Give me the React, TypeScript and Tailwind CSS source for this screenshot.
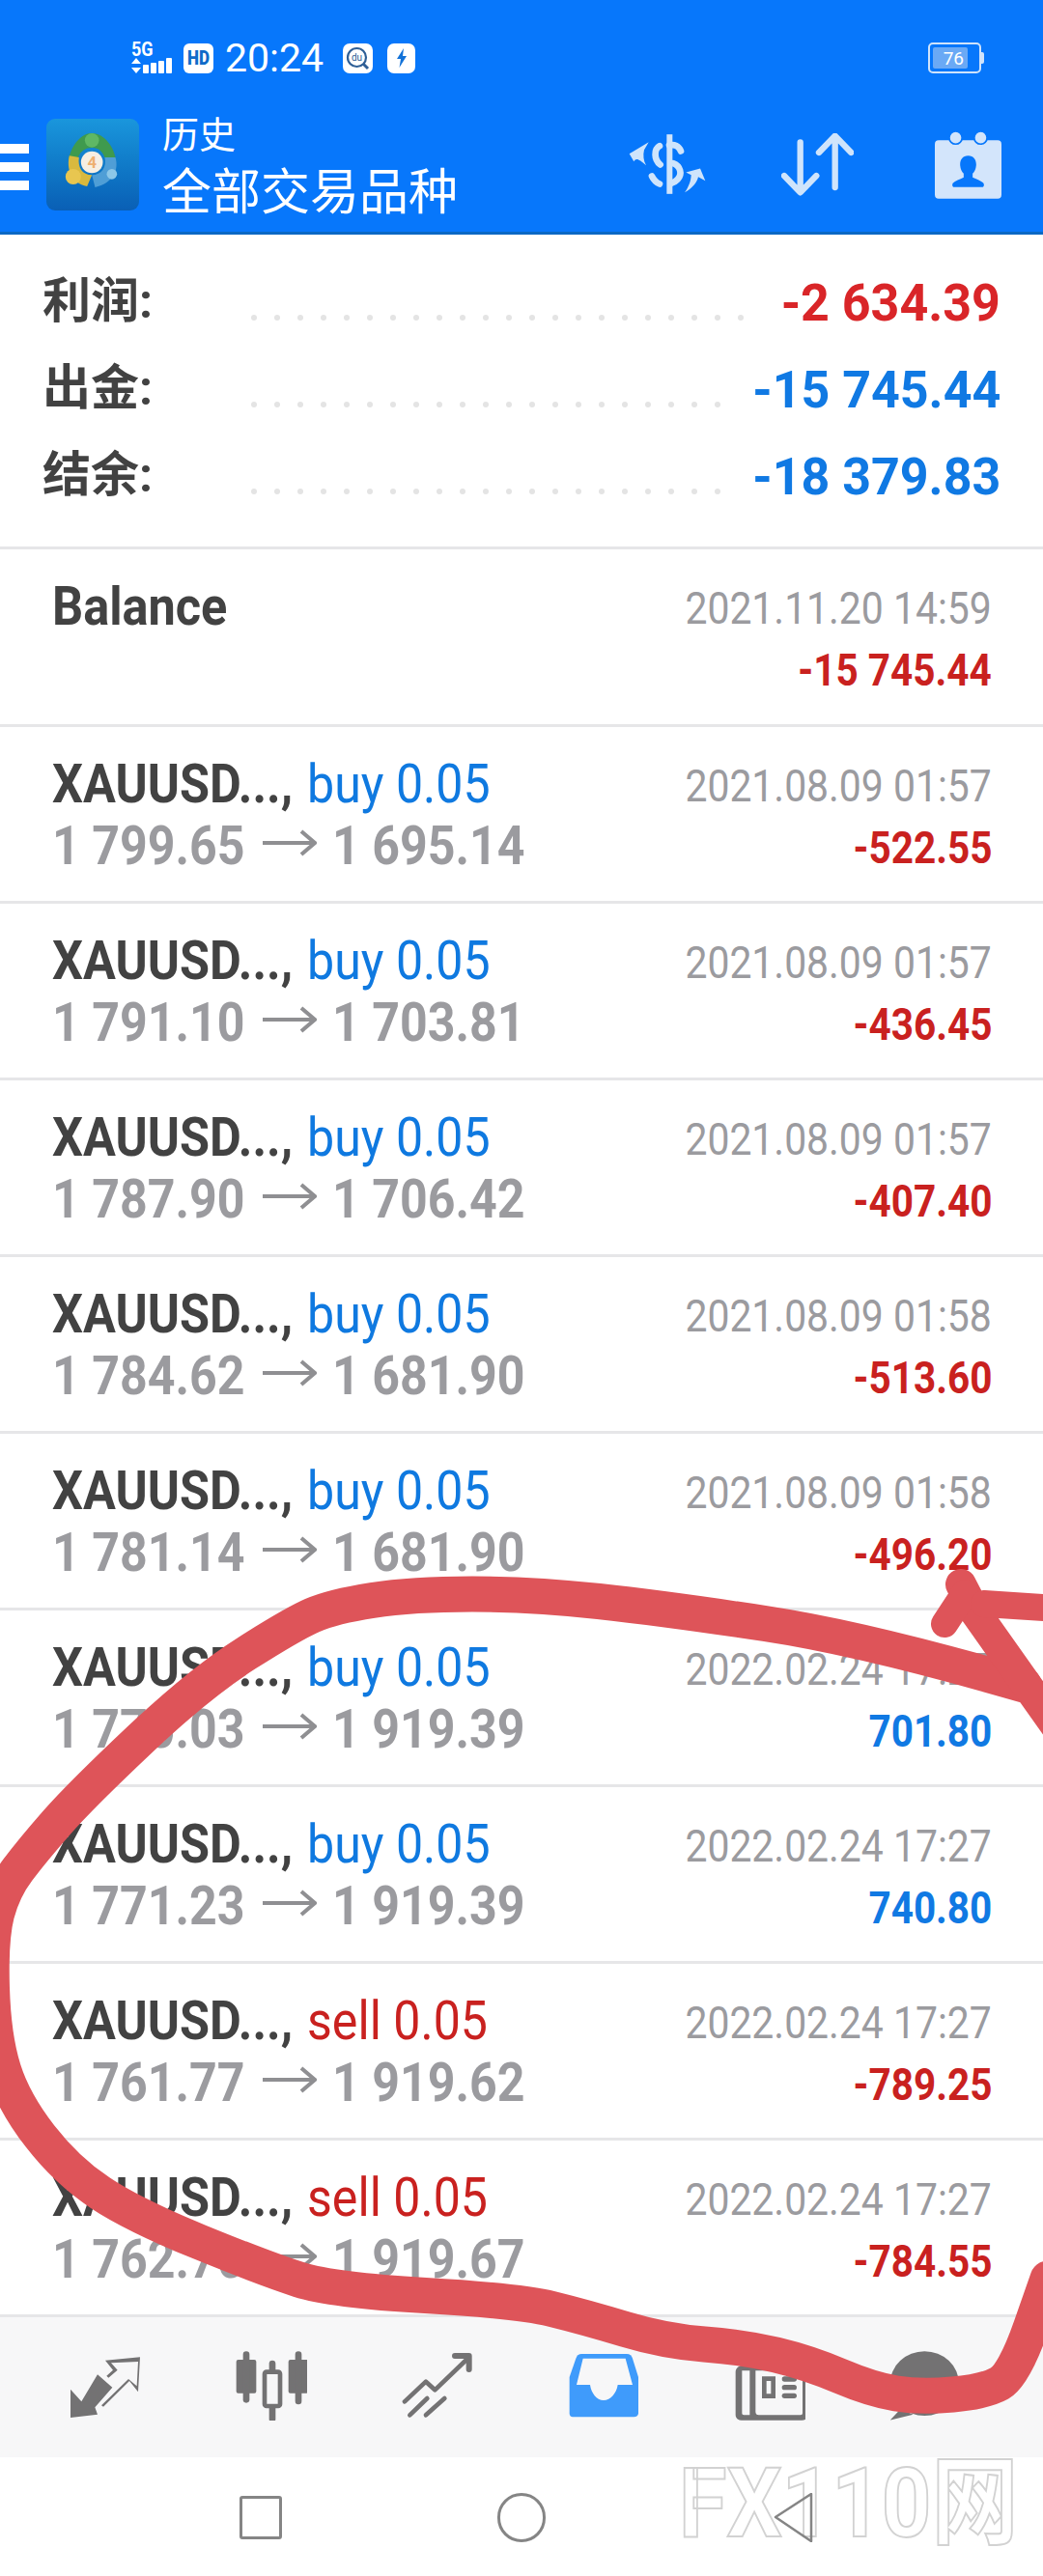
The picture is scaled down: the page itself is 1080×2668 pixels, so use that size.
import React from "react";

const trades = [
  { side: "buy", lots: "0.05", open: "1 799.65", close: "1 695.14", date: "2021.08.09 01:57", profit: "-522.55" },
  { side: "buy", lots: "0.05", open: "1 791.10", close: "1 703.81", date: "2021.08.09 01:57", profit: "-436.45" },
  { side: "buy", lots: "0.05", open: "1 787.90", close: "1 706.42", date: "2021.08.09 01:57", profit: "-407.40" },
  { side: "buy", lots: "0.05", open: "1 784.62", close: "1 681.90", date: "2021.08.09 01:58", profit: "-513.60" },
  { side: "buy", lots: "0.05", open: "1 781.14", close: "1 681.90", date: "2021.08.09 01:58", profit: "-496.20" },
  { side: "buy", lots: "0.05", open: "1 770.03", close: "1 919.39", date: "2022.02.24 17:27", profit: "701.80" },
  { side: "buy", lots: "0.05", open: "1 771.23", close: "1 919.39", date: "2022.02.24 17:27", profit: "740.80" },
  { side: "sell", lots: "0.05", open: "1 761.77", close: "1 919.62", date: "2022.02.24 17:27", profit: "-789.25" },
  { side: "sell", lots: "0.05", open: "1 762.70", close: "1 919.67", date: "2022.02.24 17:27", profit: "-784.55" },
];

const summary = [
  { label: "利润:", value: "-2 634.39", color: "text-[#d92528]", dots: 22 },
  { label: "出金:", value: "-15 745.44", color: "text-[#1079e3]", dots: 21 },
  { label: "结余:", value: "-18 379.83", color: "text-[#1079e3]", dots: 21 },
];

// red marker drawn over the screenshot
const toPath = (pts: number[][]) => {
  let d = `M${pts[0][0]} ${pts[0][1]}`;
  for (let i = 1; i < pts.length - 1; i++) {
    const mx = (pts[i][0] + pts[i + 1][0]) / 2;
    const my = (pts[i][1] + pts[i + 1][1]) / 2;
    d += ` Q${pts[i][0]} ${pts[i][1]} ${mx} ${my}`;
  }
  const last = pts[pts.length - 1];
  return d + ` L${last[0]} ${last[1]}`;
};

const mainStroke = [
  [1060, 1745], [895, 1697], [689, 1666], [551, 1651], [427, 1651], [344, 1664], [303, 1682], [207, 1743], [83, 1860],
  [34, 1916], [3, 1957], [-10, 2008], [-7, 2110], [14, 2177], [69, 2248], [138, 2294], [275, 2350], [344, 2372],
  [537, 2383], [606, 2400], [689, 2425], [770, 2431], [837, 2447], [903, 2475], [953, 2483], [1020, 2477], [1050, 2460],
  [1085, 2360],
];

const Marker = () => (
  <svg className="absolute left-0 top-0 z-10" width="1080" height="2668" viewBox="0 0 1080 2668" fill="none">
    <g stroke="#de5459" strokeWidth="37" strokeLinecap="round" strokeLinejoin="round">
      <path d={toPath(mainStroke)} />
      <path d="M995 1641 L1010 1670 L1095 1790" strokeWidth="32" />
      <path d="M978 1682 L999 1650" strokeWidth="28" />
      <path d="M1019 1661 L1095 1666" strokeWidth="28" />
    </g>
  </svg>
);

const StatusBar = () => (
  <div className="flex h-[110px] items-center pl-[136px] pr-[61px] pt-[10px] text-white">
    <div className="flex h-[32px] w-[49px] flex-col justify-between">
      <span className="inline-block origin-left scale-x-[0.9] text-[20px] font-bold leading-[15px]">5G</span>
      <div className="flex items-end gap-[2px]">
        <svg width="10" height="16" viewBox="0 0 10 16" fill="white">
          <path d="M5 0 10 6H0ZM0 10H10L5 16Z" />
        </svg>
        <div className="h-[9px] w-[6px] rounded-[1px] bg-white" />
        <div className="h-[11px] w-[6px] rounded-[1px] bg-white" />
        <div className="h-[13px] w-[6px] rounded-[1px] bg-white" />
        <div className="h-[16px] w-[6px] rounded-[1px] bg-white" />
      </div>
    </div>
    <div className="ml-[5px] flex h-[31px] w-[31px] items-center justify-center rounded-[6px] bg-white text-[20px] font-black text-[#0f6bc8]">
      <span className="inline-block scale-x-[0.85]">HD</span>
    </div>
    <span className="ml-[12px] text-[41px] leading-none">20:24</span>
    <div className="ml-[20px] flex h-[31px] w-[31px] items-center justify-center rounded-[7px] bg-white">
      <svg width="25" height="25" viewBox="0 0 25 25" fill="none" stroke="#2f5f96" strokeWidth="2.2">
        <circle cx="11.5" cy="11.5" r="9.5" />
        <path d="M18 18 23 23" strokeWidth="3" />
        <text x="11.5" y="15" textAnchor="middle" fontSize="10" stroke="none" fill="#2f5f96">du</text>
      </svg>
    </div>
    <div className="ml-[15px] flex h-[31px] w-[29px] items-center justify-center rounded-[7px] bg-white">
      <svg width="12" height="20" viewBox="0 0 12 20" fill="#1272d8">
        <path d="M8 0 1 11H5L3.500 20 11 8H7Z" />
      </svg>
    </div>
    <div className="ml-auto flex h-[32px] w-[58px] items-center">
      <div className="flex h-full w-[55px] items-center rounded-[5px] border-2 border-[#cfe3fb] p-[3px]">
        <div className="flex h-full w-[36px] items-center justify-end rounded-[2px] bg-[#6aa9f5] pr-[4px] text-[19px] leading-none text-white">
          76
        </div>
      </div>
      <div className="h-[12px] w-[3px] rounded-r-[2px] bg-[#cfe3fb]" />
    </div>
  </div>
);

const Logo = () => (
  <div className="ml-[18px] h-[95px] w-[96px] rounded-[9px] bg-gradient-to-b from-[#1a96dc] to-[#0a5fb5]">
    <svg width="96" height="95" viewBox="25 15 285 285">
      <path d="M165 60C205 60 235 105 240 145L205 135C195 110 180 105 165 105C145 105 130 115 122 135L92 145C100 100 130 60 165 60Z" fill="#3f9a4e" />
      <circle cx="165" cy="82" r="22" fill="#5fb865" />
      <path d="M95 130C85 170 100 215 150 225L165 190C135 190 120 165 125 135Z" fill="#d9b93e" />
      <circle cx="107" cy="195" r="24" fill="#e8c650" />
      <path d="M238 135C250 175 230 215 175 228L165 190C195 190 212 165 205 135Z" fill="#4f9ed6" />
      <circle cx="227" cy="187" r="16" fill="#8cc7e8" />
      <circle cx="165" cy="150" r="34" fill="#f6efe3" />
      <text x="165" y="168" textAnchor="middle" fontSize="50" fontWeight="700" fill="#eeb071">4</text>
    </svg>
  </div>
);

const ExchangeIcon = () => (
  <svg width="80" height="62" viewBox="60 40 240 185" fill="#cfe4fb">
    <path d="M178 40h18v185h-18z" />
    <path fill="none" stroke="#cfe4fb" strokeWidth="20" strokeLinecap="round" d="M222 92c-6-16-20-22-36-18M156 76c-18 10-18 42 2 58M198 130c22 8 30 32 14 50-6 7-14 10-20 12M132 170c6 12 14 20 24 24" />
    <path d="M62 100 122 64 108 88C104 104 106 122 114 136 92 118 84 112 76 124Z" />
    <path d="M298 184 282 146 238 158 254 166C254 182 246 204 234 220 256 208 272 190 276 172Z" />
  </svg>
);

const SortIcon = () => (
  <svg width="75" height="65" viewBox="535 40 225 195" fill="none" stroke="#cfe4fb" strokeWidth="19" strokeLinecap="round" strokeLinejoin="round">
    <path d="M594 68V222M544 172 594 224 644 172" />
    <path d="M702 208V50M652 100 702 48 752 100" />
  </svg>
);

const CalendarIcon = () => (
  <svg width="69" height="71" viewBox="1012 28 208 212" fill="#d3e5fb">
    <rect x="1012" y="58" width="208" height="182" rx="12" />
    <circle cx="1077" cy="50" r="20" stroke="#0777fb" strokeWidth="5" />
    <circle cx="1155" cy="50" r="20" stroke="#0777fb" strokeWidth="5" />
    <path fill="#0777fb" d="M1116 106c-18 0-26 14-25 30 1 12 5 20 11 26v12c-12 6-26 10-34 18-2 4-2 10 2 12h92c4-2 4-8 2-12-8-8-22-12-34-18v-12c6-6 10-14 11-26 1-16-7-30-25-30Z" />
  </svg>
);

const Header = () => (
  <div className="border-b-[3px] border-[#0b68c4] bg-[#0777fb]">
    <StatusBar />
    <div className="flex h-[130px] items-center pb-[10px]">
      <div className="mt-[6px] flex w-[30px] flex-col gap-[9px]">
        <div className="h-[10px] bg-white" />
        <div className="h-[10px] bg-white" />
        <div className="h-[10px] bg-white" />
      </div>
      <Logo />
      <div className="ml-[24px] flex flex-col text-white">
        <span className="text-[38px] leading-[60px]">历史</span>
        <span className="text-[51px] leading-[60px]">全部交易品种</span>
      </div>
      <div className="ml-auto flex items-center pr-[43px]">
        <ExchangeIcon />
        <div className="ml-[78px] mr-[84px]">
          <SortIcon />
        </div>
        <CalendarIcon />
      </div>
    </div>
  </div>
);

const Summary = () => (
  <div className="border-b-[3px] border-[#e6e6e8] pb-[29px] pt-[24px]">
    {summary.map((row) => (
      <div key={row.label} className="flex h-[90px] items-center pl-[44px] pr-[44px]">
        <span className="w-[216px] text-[50px] font-bold leading-none text-[#424242]">{row.label}</span>
        <div className="flex gap-[18px] self-end pb-[25px]">
          {Array.from({ length: row.dots }).map((_, i) => (
            <div key={i} className="h-[6px] w-[6px] rounded-full bg-[#e4e4e4]" />
          ))}
        </div>
        <span className={`ml-auto inline-block origin-right scale-x-[0.98] pt-[5px] text-[53px] font-bold leading-none ${row.color}`}>{row.value}</span>
      </div>
    ))}
  </div>
);

const RightColumn = ({ date, profit }: { date: string; profit: string }) => (
  <div className="flex flex-col items-end">
    <span className="inline-block origin-right scale-x-[0.87] whitespace-nowrap text-[47px] leading-[65px] text-[#9b9b9f]">{date}</span>
    <span
      className={`inline-block origin-right scale-x-[0.88] whitespace-nowrap text-[46px] font-bold leading-[65px] ${
        profit.startsWith("-") ? "text-[#c9211f]" : "text-[#1079e3]"
      }`}
    >
      {profit}
    </span>
  </div>
);

const BalanceRow = () => (
  <div className="flex h-[184px] justify-between border-b-[3px] border-[#e6e6e8] pl-[54px] pr-[53px] pt-[28px]">
    <span className="inline-block origin-left scale-x-[0.9] pt-[2px] text-[56px] font-bold leading-[58px] text-[#424242]">Balance</span>
    <RightColumn date="2021.11.20 14:59" profit="-15 745.44" />
  </div>
);

const TradeRow = ({ trade }: { trade: (typeof trades)[number] }) => (
  <div className="flex h-[183px] justify-between border-b-[3px] border-[#e6e6e8] pl-[54px] pr-[53px] pt-[27px]">
    <div className="flex flex-col items-start">
      <div className="flex h-[64px] items-center whitespace-nowrap text-[56px] leading-[64px]">
        <span className="inline-block w-[264px] origin-left scale-x-[0.9] font-bold text-[#424242]">XAUUSD...,</span>
        <span className={`inline-block origin-left scale-x-[0.895] ${trade.side === "buy" ? "text-[#0f79e0]" : "text-[#c9211f]"}`}>
          {trade.side} {trade.lots}
        </span>
      </div>
      <div className="flex h-[64px] items-center whitespace-nowrap text-[56px] font-bold leading-[64px] text-[#9b9b9f]">
        <span className="inline-block w-[218px] origin-left scale-x-[0.895]">{trade.open}</span>
        <svg width="56" height="30" viewBox="0 0 56 30" fill="none" stroke="#8f8f92" strokeWidth="4" className="-mt-[6px]">
          <path d="M0 15H53M40 3 54 15 40 27" />
        </svg>
        <span className="ml-[16px] inline-block origin-left scale-x-[0.895]">{trade.close}</span>
      </div>
    </div>
    <div className="pt-[1px]">
      <RightColumn date={trade.date} profit={trade.profit} />
    </div>
  </div>
);

const navColor = "#737273";

const TabBar = () => (
  <div className="flex h-[145px] items-start bg-[#f7f7f8] pl-[72px] pt-[35px]">
    <div className="flex gap-[98px]">
      <svg width="74" height="72" viewBox="99 39 222 216" fill={navColor}>
        <path d="M102 158 136 196 186 112 232 152 178 214 186 236 102 246Z" />
        <path d="M210 68 318 58 312 166 285 132 204 212 198 208 282 126 308 148 312 72 228 76 248 98 220 122 214 116 234 98Z" />
      </svg>
      <svg width="74" height="72" viewBox="610 39 222 216" fill={navColor}>
        <rect x="612" y="66" width="62" height="104" rx="6" />
        <rect x="633" y="40" width="20" height="160" rx="10" />
        <rect x="774" y="66" width="62" height="104" rx="6" />
        <rect x="795" y="40" width="20" height="165" rx="10" />
        <rect x="714" y="68" width="20" height="192" rx="10" />
        <rect x="700" y="104" width="48" height="106" rx="6" fill="#f7f7f8" stroke={navColor} strokeWidth="14" />
      </svg>
      <svg width="74" height="72" viewBox="1131 39 222 216" fill="none" stroke={navColor} strokeWidth="14" strokeLinecap="round" strokeLinejoin="round">
        <path d="M1140 196 1206 134 1234 160 1332 66" />
        <path d="M1296 54H1340V96" strokeWidth="18" />
        <path d="M1156 238 1210 186M1206 238 1264 186" />
      </svg>
      <svg width="74" height="72" viewBox="57 39 222 216">
        <path fill="#3f9bfb" d="M100 48H240C250 48 255 54 258 62L276 120V232C276 240 270 244 262 244H72C66 244 62 240 62 232V120L82 62C85 54 90 48 100 48Z" />
        <path fill="#f7f7f8" d="M104 62H236L258 144H212C208 170 190 192 168 192 146 192 130 170 126 144H84Z" />
      </svg>
      <svg width="74" height="72" viewBox="573 39 222 216" fill={navColor}>
        <path fillRule="evenodd" d="M600 84H782C794 84 802 92 802 104V238C802 248 794 254 784 254H596C586 254 578 248 578 238V104C578 92 588 84 600 84ZM598 100V232C598 236 600 238 604 238H622V100ZM640 100V228C640 234 644 238 650 238H780C784 238 786 236 786 232V104C786 100 784 100 780 100Z" />
        <path fillRule="evenodd" d="M660 118H702V186H660ZM674 132V172H688V132Z" />
        <rect x="722" y="118" width="46" height="16" rx="8" />
        <rect x="722" y="144" width="46" height="16" rx="8" />
        <rect x="722" y="170" width="46" height="16" rx="8" />
      </svg>
      <svg className="-ml-[10px]" width="74" height="72" viewBox="1059 39 222 216" fill={navColor}>
        <ellipse cx="1165" cy="140" rx="107" ry="100" />
        <path d="M1090 220 1058 254 1130 236Z" />
      </svg>
    </div>
  </div>
);

const SystemBar = () => (
  <div className="relative flex h-[125px] items-center pl-[248px]">
    <span className="absolute left-[703px] top-[2px] inline-block origin-left scale-x-[0.9] whitespace-nowrap text-[100px] font-bold leading-[92px] text-white [-webkit-text-stroke:2px_#d2d2d2]">
      FX110网
    </span>
    <div className="relative h-[45px] w-[44px] rounded-[3px] border-[3px] border-[#858585]" />
    <div className="relative ml-[223px] h-[51px] w-[50px] rounded-full border-[3px] border-[#858585]" />
    <svg className="relative ml-[236px]" width="41" height="51" viewBox="0 0 41 51" fill="none" stroke="#858585" strokeWidth="3" strokeLinejoin="round">
      <path d="M39 1 2 25 39 50V1Z" strokeWidth="2.500" />
    </svg>
  </div>
);

const App = () => {
  return (
    <div className="relative h-[2668px] w-[1080px] overflow-hidden bg-white font-['Roboto','Noto_Sans_CJK_SC',sans-serif]">
      <Header />
      <Summary />
      <BalanceRow />
      {trades.map((trade, i) => (
        <TradeRow key={i} trade={trade} />
      ))}
      <TabBar />
      <SystemBar />
      <Marker />
    </div>
  );
};

export default App;
